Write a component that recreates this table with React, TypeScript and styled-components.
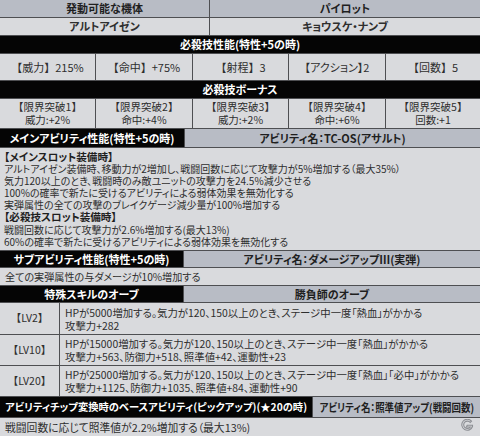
import React from "react";
import styled, { createGlobalStyle, css } from "styled-components";

const Global = createGlobalStyle`
  html, body { margin: 0; padding: 0; background: #d9dadd; }
  * { box-sizing: border-box; }
`;

const Table = styled.div`
  width: 480px;
  height: 436px;
  display: flex;
  flex-direction: column;
  background: #d9dadd;
  font-family: "Noto Sans CJK JP", "Noto Sans", sans-serif;
  font-feature-settings: "palt";
  color: #2b2b2b;
  overflow: hidden;
  position: relative;
`;

const Row = styled.div<{ $h: number; $cols?: string }>`
  display: grid;
  grid-template-columns: ${(p) => p.$cols ?? "1fr"};
  height: ${(p) => p.$h}px;
  flex: none;
  border-bottom: 1px solid #4e4f52;
`;

type Variant = "head" | "light" | "black";

const Cell = styled.div<{
  $v: Variant;
  $align?: "center" | "left";
  $size?: number;
  $full?: boolean;
  $bold?: boolean;
}>`
  display: flex;
  flex-direction: column;
  justify-content: center;
  align-items: ${(p) => (p.$align === "left" ? "flex-start" : "center")};
  text-align: ${(p) => (p.$align === "left" ? "left" : "center")};
  padding: ${(p) => (p.$align === "left" ? "0 5px" : "0 1px")};
  font-size: ${(p) => p.$size ?? 11}px;
  line-height: 1.15;
  white-space: nowrap;
  overflow: hidden;
  border-right: 1px solid #4e4f52;
  &:last-child { border-right: none; }
  ${(p) => p.$full && css`font-feature-settings: normal;`}
  ${(p) =>
    p.$v === "head" &&
    css`
      background: #b8bcc5;
      font-weight: 700;
      color: #1f1f1f;
    `}
  ${(p) =>
    p.$v === "light" &&
    css`
      background: #d9dadd;
      color: #2e2e2e;
      font-weight: ${p.$bold ? 700 : 400};
    `}
  ${(p) =>
    p.$v === "black" &&
    css`
      background: #050505;
      color: #ffffff;
      font-weight: 700;
    `}
`;

const Squeeze = styled.span<{ $x: number }>`
  display: inline-block;
  transform: scaleX(${(p) => p.$x});
  transform-origin: center;
`;

const Block = styled.div`
  padding: 3px 5px 0 4px;
  font-size: 10px;
  line-height: 12.1px;
  color: #2e2e2e;
  white-space: nowrap;
  background: #d9dadd;
`;

const Bold = styled.div`
  font-weight: 700;
  color: #1f1f1f;
  font-size: 10.6px;
`;

const LvText = styled.div`
  line-height: 13px;
  font-size: 10.4px;
`;

const Logo = styled.svg`
  position: absolute;
  right: 6px;
  bottom: 4px;
`;

const five = "96px 97px 96px 97px 1fr";

export default function App() {
  return (
    <>
      <Global />
      <Table>
        <Row $h={18} $cols="210px 1fr">
          <Cell $v="head">発動可能な機体</Cell>
          <Cell $v="head">パイロット</Cell>
        </Row>
        <Row $h={18} $cols="210px 1fr">
          <Cell $v="light" $bold>アルトアイゼン</Cell>
          <Cell $v="light" $bold>キョウスケ・ナンブ</Cell>
        </Row>
        <Row $h={18}>
          <Cell $v="black">必殺技性能(特性+5の時)</Cell>
        </Row>
        <Row $h={27} $cols={five}>
          <Cell $v="light" $full>【威力】215%</Cell>
          <Cell $v="light" $full>【命中】+75%</Cell>
          <Cell $v="light" $full>【射程】3</Cell>
          <Cell $v="light">【アクション】2</Cell>
          <Cell $v="light" $full>【回数】5</Cell>
        </Row>
        <Row $h={18}>
          <Cell $v="black">必殺技ボーナス</Cell>
        </Row>
        <Row $h={30} $cols={five}>
          <Cell $v="light" $size={10.5} $full>
            <div>【限界突破1】</div>
            <div>威力:+2%</div>
          </Cell>
          <Cell $v="light" $size={10.5} $full>
            <div>【限界突破2】</div>
            <div>命中:+4%</div>
          </Cell>
          <Cell $v="light" $size={10.5} $full>
            <div>【限界突破3】</div>
            <div>威力:+2%</div>
          </Cell>
          <Cell $v="light" $size={10.5} $full>
            <div>【限界突破4】</div>
            <div>命中:+6%</div>
          </Cell>
          <Cell $v="light" $size={10.5} $full>
            <div>【限界突破5】</div>
            <div>回数:+1</div>
          </Cell>
        </Row>
        <Row $h={19} $cols="185px 1fr">
          <Cell $v="black">メインアビリティ性能(特性+5の時)</Cell>
          <Cell $v="head">アビリティ名：TC-OS(アサルト)</Cell>
        </Row>
        <Row $h={103}>
          <Block>
            <Bold>【メインスロット装備時】</Bold>
            <div>アルトアイゼン装備時、移動力が2増加し、戦闘回数に応じて攻撃力が5%増加する（最大35%）</div>
            <div>気力120以上のとき、戦闘時のみ敵ユニットの攻撃力を24.5%減少させる</div>
            <div>100%の確率で新たに受けるアビリティによる弱体効果を無効化する</div>
            <div>実弾属性の全ての攻撃のブレイクゲージ減少量が100%増加する</div>
            <Bold>【必殺技スロット装備時】</Bold>
            <div>戦闘回数に応じて攻撃力が2.6%増加する(最大13%)</div>
            <div>60%の確率で新たに受けるアビリティによる弱体効果を無効化する</div>
          </Block>
        </Row>
        <Row $h={17} $cols="184px 1fr">
          <Cell $v="black">サブアビリティ性能(特性+5の時)</Cell>
          <Cell $v="head">アビリティ名：ダメージアップⅢ(実弾)</Cell>
        </Row>
        <Row $h={18}>
          <Cell $v="light" $align="left" $size={10.1}>全ての実弾属性の与ダメージが10%増加する</Cell>
        </Row>
        <Row $h={17} $cols="184px 1fr">
          <Cell $v="black">特殊スキルのオーブ</Cell>
          <Cell $v="head">勝負師のオーブ</Cell>
        </Row>
        <Row $h={32} $cols="60px 1fr">
          <Cell $v="light" $full $size={10.5}>【LV2】</Cell>
          <Cell $v="light" $align="left">
            <LvText>HPが5000増加する。気力が120、150以上のとき、ステージ中一度「熱血」がかかる</LvText>
            <LvText>攻撃力+282</LvText>
          </Cell>
        </Row>
        <Row $h={31} $cols="60px 1fr">
          <Cell $v="light" $full $size={10.5}>【LV10】</Cell>
          <Cell $v="light" $align="left">
            <LvText>HPが15000増加する。気力が120、150以上のとき、ステージ中一度「熱血」がかかる</LvText>
            <LvText>攻撃力+563、防御力+518、照準値+42、運動性+23</LvText>
          </Cell>
        </Row>
        <Row $h={31} $cols="60px 1fr">
          <Cell $v="light" $full $size={10.5}>【LV20】</Cell>
          <Cell $v="light" $align="left">
            <LvText>HPが25000増加する。気力が120、150以上のとき、ステージ中一度「熱血」「必中」がかかる</LvText>
            <LvText>攻撃力+1125、防御力+1035、照準値+84、運動性+90</LvText>
          </Cell>
        </Row>
        <Row $h={21} $cols="313px 1fr">
          <Cell $v="black" $size={10.5}>
            <Squeeze $x={0.98}>アビリティチップ変換時のベースアビリティ(ピックアップ)(★20の時)</Squeeze>
          </Cell>
          <Cell $v="head" $size={11}>
            <Squeeze $x={0.86}>アビリティ名：照準値アップ(戦闘回数)</Squeeze>
          </Cell>
        </Row>
        <Row $h={19}>
          <Cell $v="light" $align="left" $size={10.8}>戦闘回数に応じて照準値が2.2%増加する（最大13%)</Cell>
        </Row>
        <Logo width="14" height="13" viewBox="0 0 14 13">
          <path
            d="M11.5 2.2 A5.5 5.5 0 1 0 12.5 7.5 L12.5 6.2 L7.2 6.2 L6.4 8 L10.4 8 A3.7 3.7 0 1 1 10.2 3.4 Z"
            fill="none"
            stroke="#8d8f94"
            strokeWidth="1.1"
          />
        </Logo>
      </Table>
    </>
  );
}
